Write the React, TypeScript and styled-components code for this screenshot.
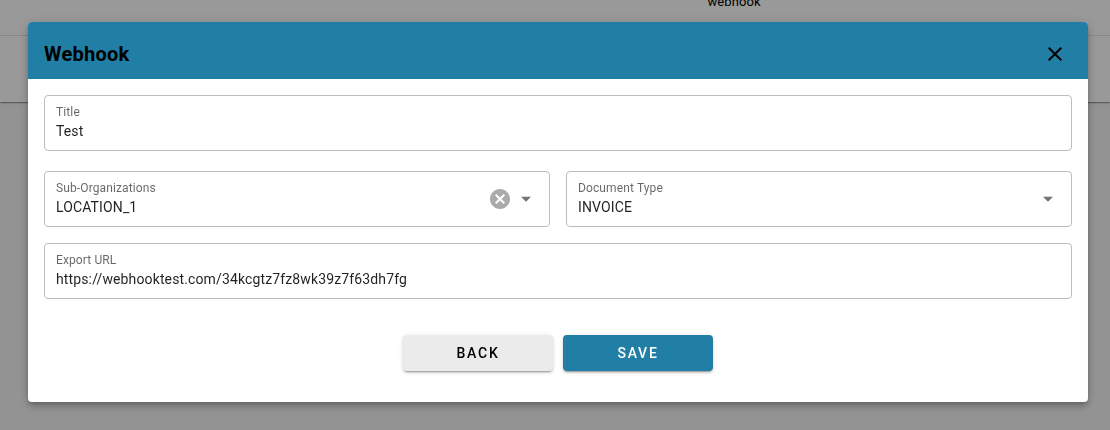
import React from "react";
import styled, { createGlobalStyle, css } from "styled-components";

const GlobalStyle = createGlobalStyle`
  * { box-sizing: border-box; }
  html, body, #root { height: 100%; }
  body {
    margin: 0;
    overflow: hidden;
    background: #f5f5f5;
    font-family: Roboto, "Liberation Sans", sans-serif;
  }
`;

const Page = styled.main`
  height: 100%;
`;

const TableSheet = styled.section`
  height: 102px;
  background: #fff;
  box-shadow: 0 2px 1px -1px rgba(0, 0, 0, 0.2), 0 1px 1px rgba(0, 0, 0, 0.14),
    0 1px 3px rgba(0, 0, 0, 0.12);
`;

const TableRow = styled.div`
  display: flex;
  align-items: flex-start;
  height: 36px;
  padding-left: 707.5px;
  border-bottom: 1px solid rgba(0, 0, 0, 0.12);
`;

const TableCell = styled.span`
  margin-top: -8px;
  font-size: 13px;
  line-height: 20px;
  letter-spacing: 0.1px;
`;

const Backdrop = styled.div`
  position: fixed;
  inset: 0;
  display: flex;
  align-items: flex-start;
  justify-content: center;
  padding: 22px 22px 0 28px;
  background: rgba(0, 0, 0, 0.4);
`;

const Dialog = styled.section`
  flex: 1;
  display: flex;
  flex-direction: column;
  height: 380px;
  overflow: hidden;
  border-radius: 4px;
  background: #fff;
  box-shadow: 0 3px 5px -1px rgba(0, 0, 0, 0.2), 0 5px 8px rgba(0, 0, 0, 0.14),
    0 1px 14px rgba(0, 0, 0, 0.12);
`;

const Header = styled.header`
  display: flex;
  align-items: center;
  justify-content: space-between;
  height: 57px;
  padding: 7px 21px 0 16px;
  background: #217ea4;
`;

const Heading = styled.h2`
  margin: 0;
  font-size: 20px;
  font-weight: 700;
  line-height: 32px;
  letter-spacing: 0.25px;
`;

const CloseButton = styled.button`
  display: flex;
  padding: 0;
  border: 0;
  background: none;
  color: #000;
`;

const Form = styled.form`
  display: flex;
  flex-direction: column;
  padding: 16px;
`;

const FieldRow = styled.div`
  display: grid;
  grid-template-columns: 1fr 1fr;
  gap: 16px;
  margin: 20px 0 16px;
`;

const Field = styled.div`
  display: flex;
  align-items: center;
  height: 56px;
  padding: 0 11px;
  border: 1px solid #bdbdbd;
  border-radius: 4px;
`;

const FieldText = styled.div`
  flex: 1;
  display: flex;
  flex-direction: column;
  padding-bottom: 3px;
`;

const Label = styled.span`
  font-size: 12px;
  line-height: 18px;
  letter-spacing: 0.12px;
  color: rgba(0, 0, 0, 0.6);
`;

const Value = styled.span`
  font-size: 14px;
  line-height: 20px;
  letter-spacing: 0.13px;
  color: rgba(0, 0, 0, 0.87);
`;

const FieldIcons = styled.div`
  display: flex;
  align-items: center;
  gap: 2px;
`;

const Actions = styled.div`
  display: flex;
  justify-content: center;
  gap: 10px;
  margin-top: 36px;
`;

const ActionButton = styled.button<{ $primary?: boolean }>`
  width: 150px;
  height: 36px;
  padding: 0;
  border: 0;
  border-radius: 4px;
  font: 500 14px/36px Roboto, "Liberation Sans", sans-serif;
  letter-spacing: 1.75px;
  box-shadow: 0 3px 1px -2px rgba(0, 0, 0, 0.2), 0 2px 2px rgba(0, 0, 0, 0.14),
    0 1px 5px rgba(0, 0, 0, 0.12);
  ${({ $primary }) =>
    $primary
      ? css`
          background: #217ea4;
          color: #fff;
        `
      : css`
          background: #ebebeb;
          color: #000;
        `}
`;

const CloseIcon = () => (
  <svg width="24" height="24" viewBox="0 0 24 24" fill="currentColor">
    <path d="M19 6.41 17.59 5 12 10.59 6.41 5 5 6.41 10.59 12 5 17.59 6.41 19 12 13.41 17.59 19 19 17.59 13.41 12z" />
  </svg>
);

const ClearIcon = () => (
  <svg width="24" height="24" viewBox="0 0 24 24" fill="#ababab">
    <path d="M12 2C6.47 2 2 6.47 2 12s4.47 10 10 10 10-4.47 10-10S17.53 2 12 2zm5 13.59L15.59 17 12 13.41 8.41 17 7 15.59 10.59 12 7 8.41 8.41 7 12 10.59 15.59 7 17 8.41 13.41 12 17 15.59z" />
  </svg>
);

const ArrowIcon = () => (
  <svg width="24" height="24" viewBox="0 0 24 24" fill="#737373">
    <path d="M7 9.7h10l-5 5z" />
  </svg>
);

type FormFieldProps = { label: string; value: string; children?: React.ReactNode };

const FormField = ({ label, value, children }: FormFieldProps) => (
  <Field>
    <FieldText>
      <Label>{label}</Label>
      <Value>{value}</Value>
    </FieldText>
    {children && <FieldIcons>{children}</FieldIcons>}
  </Field>
);

export default function App() {
  return (
    <>
      <GlobalStyle />
      <Page>
        <TableSheet>
          <TableRow>
            <TableCell>webhook</TableCell>
          </TableRow>
        </TableSheet>
      </Page>
      <Backdrop>
        <Dialog role="dialog" aria-label="Webhook">
          <Header>
            <Heading>Webhook</Heading>
            <CloseButton type="button" aria-label="Close">
              <CloseIcon />
            </CloseButton>
          </Header>
          <Form>
            <FormField label="Title" value="Test" />
            <FieldRow>
              <FormField label="Sub-Organizations" value="LOCATION_1">
                <ClearIcon />
                <ArrowIcon />
              </FormField>
              <FormField label="Document Type" value="INVOICE">
                <ArrowIcon />
              </FormField>
            </FieldRow>
            <FormField label="Export URL" value="https://webhooktest.com/34kcgtz7fz8wk39z7f63dh7fg" />
            <Actions>
              <ActionButton type="button">BACK</ActionButton>
              <ActionButton type="button" $primary>
                SAVE
              </ActionButton>
            </Actions>
          </Form>
        </Dialog>
      </Backdrop>
    </>
  );
}
